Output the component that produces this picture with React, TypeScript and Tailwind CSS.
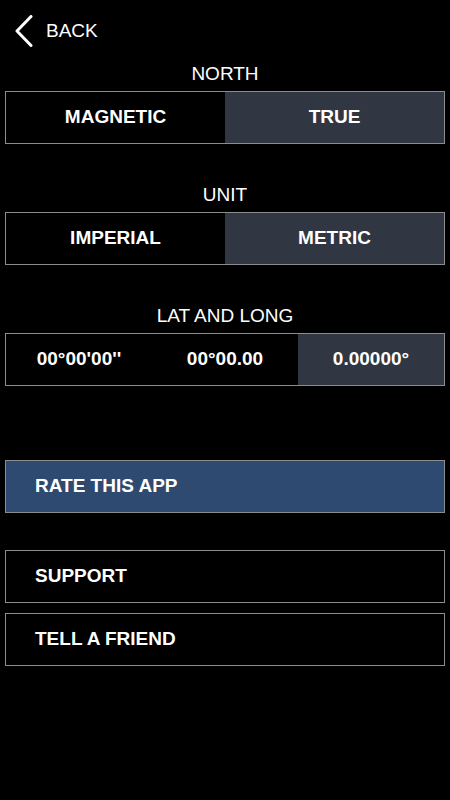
import React from "react";

function Segmented({ options, selected }: { options: string[]; selected: number }) {
  return (
    <div className="mx-[5px] flex h-[53px] border border-[#8c8c8c]">
      {options.map((o, i) => (
        <div
          key={o}
          className={`flex flex-1 items-center justify-center text-[19px] font-bold text-white ${
            i === selected ? "bg-[#303742]" : "bg-black"
          }`}
        >
          {o}
        </div>
      ))}
    </div>
  );
}

function Section({ label, options, selected, className }: { label: string; options: string[]; selected: number; className?: string }) {
  return (
    <div className={className}>
      <div className="mb-[5px] h-[24px] text-center text-[19px] leading-[24px] text-white">{label}</div>
      <Segmented options={options} selected={selected} />
    </div>
  );
}

function Row({ label, active }: { label: string; active?: boolean }) {
  return (
    <div
      className={`mx-[5px] flex h-[53px] items-center border border-[#8c8c8c] pl-[29px] text-[19px] font-bold text-white ${
        active ? "bg-[#2f4a70]" : "bg-black"
      }`}
    >
      {label}
    </div>
  );
}

export default function App() {
  return (
    <div
      className="h-[800px] w-[450px] bg-black text-white"
      style={{ fontFamily: '"Liberation Sans", Arial, sans-serif' }}
    >
      <div className="flex h-[62px] items-center">
        <svg width="20" height="32" viewBox="0 0 20 32" className="ml-[14px]" fill="none">
          <path d="M17 1.5 L3 16 L17 30.5" stroke="white" strokeWidth="3" strokeLinecap="round" strokeLinejoin="round" />
        </svg>
        <span className="ml-[12px] text-[19px]">BACK</span>
      </div>
      <Section label="NORTH" options={["MAGNETIC", "TRUE"]} selected={1} />
      <Section className="mt-[39px]" label="UNIT" options={["IMPERIAL", "METRIC"]} selected={1} />
      <Section
        className="mt-[39px]"
        label="LAT AND LONG"
        options={["00°00'00''", "00°00.00", "0.00000°"]}
        selected={2}
      />
      <div className="mt-[74px]">
        <Row label="RATE THIS APP" active />
      </div>
      <div className="mt-[37px] flex flex-col gap-[10px]">
        <Row label="SUPPORT" />
        <Row label="TELL A FRIEND" />
      </div>
    </div>
  );
}
